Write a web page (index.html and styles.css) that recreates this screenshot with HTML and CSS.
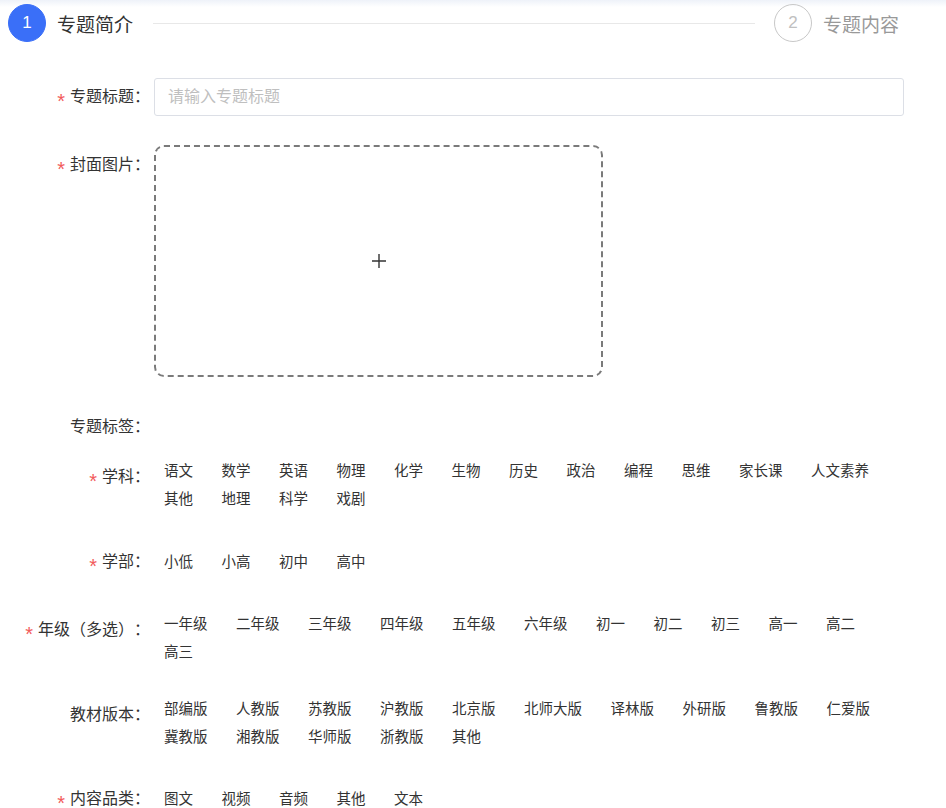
FILE: index.html
```html
<!DOCTYPE html>
<html lang="zh-CN">
<head>
    <meta charset="UTF-8">
    <title>新建专题</title>
    <link rel="stylesheet" href="styles.css">
</head>
<body>

    <!-- 步骤条 -->
    <div class="steps">
        <div class="step active">
            <span class="step-num">1</span>
            <span class="step-title">专题简介</span>
        </div>
        <div class="step-line"></div>
        <div class="step">
            <span class="step-num">2</span>
            <span class="step-title">专题内容</span>
        </div>
    </div>

    <div class="form">
        <div class="form-row row-title">
            <label class="form-label"><span class="req">*</span>专题标题：</label>
            <input class="text-input" type="text" placeholder="请输入专题标题">
        </div>

        <div class="form-row row-cover">
            <label class="form-label"><span class="req">*</span>封面图片：</label>
            <div class="upload">
                <svg width="16" height="16" viewBox="0 0 16 16">
                    <path d="M8 1v14M1 8h14" stroke="#333" stroke-width="1.4" fill="none"/>
                </svg>
            </div>
        </div>

        <div class="form-row row-group">
            <label class="form-label">专题标签：</label>
        </div>

        <div class="form-row">
            <label class="form-label"><span class="req">*</span>学科：</label>
            <div class="tags">
                <span class="tag">语文</span>
                <span class="tag">数学</span>
                <span class="tag">英语</span>
                <span class="tag">物理</span>
                <span class="tag">化学</span>
                <span class="tag">生物</span>
                <span class="tag">历史</span>
                <span class="tag">政治</span>
                <span class="tag">编程</span>
                <span class="tag">思维</span>
                <span class="tag">家长课</span>
                <span class="tag">人文素养</span>
                <span class="tag">其他</span>
                <span class="tag">地理</span>
                <span class="tag">科学</span>
                <span class="tag">戏剧</span>
            </div>
        </div>

        <div class="form-row">
            <label class="form-label"><span class="req">*</span>学部：</label>
            <div class="tags">
                <span class="tag">小低</span>
                <span class="tag">小高</span>
                <span class="tag">初中</span>
                <span class="tag">高中</span>
            </div>
        </div>

        <div class="form-row">
            <label class="form-label"><span class="req">*</span>年级（多选）：</label>
            <div class="tags">
                <span class="tag">一年级</span>
                <span class="tag">二年级</span>
                <span class="tag">三年级</span>
                <span class="tag">四年级</span>
                <span class="tag">五年级</span>
                <span class="tag">六年级</span>
                <span class="tag">初一</span>
                <span class="tag">初二</span>
                <span class="tag">初三</span>
                <span class="tag">高一</span>
                <span class="tag">高二</span>
                <span class="tag">高三</span>
            </div>
        </div>

        <div class="form-row">
            <label class="form-label">教材版本：</label>
            <div class="tags">
                <span class="tag">部编版</span>
                <span class="tag">人教版</span>
                <span class="tag">苏教版</span>
                <span class="tag">沪教版</span>
                <span class="tag">北京版</span>
                <span class="tag">北师大版</span>
                <span class="tag">译林版</span>
                <span class="tag">外研版</span>
                <span class="tag">鲁教版</span>
                <span class="tag">仁爱版</span>
                <span class="tag">冀教版</span>
                <span class="tag">湘教版</span>
                <span class="tag">华师版</span>
                <span class="tag">浙教版</span>
                <span class="tag">其他</span>
            </div>
        </div>

        <div class="form-row">
            <label class="form-label"><span class="req">*</span>内容品类：</label>
            <div class="tags">
                <span class="tag">图文</span>
                <span class="tag">视频</span>
                <span class="tag">音频</span>
                <span class="tag">其他</span>
                <span class="tag">文本</span>
            </div>
        </div>
    </div>

</body>
</html>
```

FILE: styles.css
```css
/* 基础 */
body {
    margin: 0;
    font-family: "Liberation Sans", "Noto Sans CJK SC", sans-serif;
    color: #333;
    background: #fff;
    text-spacing-trim: space-all;
}

/* 步骤条 */
.steps {
    display: flex;
    align-items: center;
    height: 46px;
    padding: 0 47px 0 8px;
    background: linear-gradient(#eef2f9, #fff 7px);
}
.step {
    display: flex;
    align-items: center;
}
.step-num {
    width: 36px;
    height: 36px;
    border: 1px solid #c8c8c8;
    border-radius: 50%;
    display: flex;
    align-items: center;
    justify-content: center;
    font-size: 17px;
    color: #c0c0c0;
}
.step-title {
    margin-left: 11px;
    font-size: 19px;
    color: #999;
}
.step.active .step-num {
    background: #3a6ff8;
    border-color: #3a6ff8;
    color: #fff;
}
.step.active .step-title {
    color: #333;
}
.step-line {
    flex: 1;
    height: 1px;
    background: #e8e8e8;
    margin: 0 19px 0 20px;
}

/* 表单 */
.form {
    padding-top: 31px;
    padding-right: 42px;
}
.form-row {
    display: flex;
    align-items: flex-start;
    margin-bottom: 28.5px;
}
.row-title {
    align-items: center;
    margin-bottom: 28px;
}
.row-cover {
    margin-bottom: 30px;
}
.row-group {
    margin-bottom: 10px;
}
.form-label {
    width: 150px;
    flex-shrink: 0;
    margin-right: 4px;
    text-align: right;
    font-size: 16px;
    line-height: 40px;
    color: #333;
    white-space: nowrap;
}
.req {
    color: #f25b5b;
    margin-right: 5px;
    font-size: 20px;
    line-height: 1;
    vertical-align: -6px;
}
.text-input {
    flex: 1;
    height: 38px;
    box-sizing: border-box;
    border: 1px solid #dcdfe6;
    border-radius: 3px;
    padding: 0 13px;
    font-family: inherit;
    font-size: 16px;
    color: #333;
    outline: none;
}
.text-input::placeholder {
    color: #bfbfbf;
}
.upload {
    width: 449px;
    height: 232px;
    box-sizing: border-box;
    border: 2px dashed #7a7a7a;
    border-radius: 10px;
    display: flex;
    align-items: center;
    justify-content: center;
}
.tags {
    flex: 1;
    min-height: 40px;
    display: flex;
    flex-wrap: wrap;
    align-items: center;
    align-content: center;
}
.tag {
    padding: 0 10px;
    margin-right: 8.5px;
    font-size: 14.5px;
    line-height: 28px;
    color: #333;
    cursor: pointer;
}
```
